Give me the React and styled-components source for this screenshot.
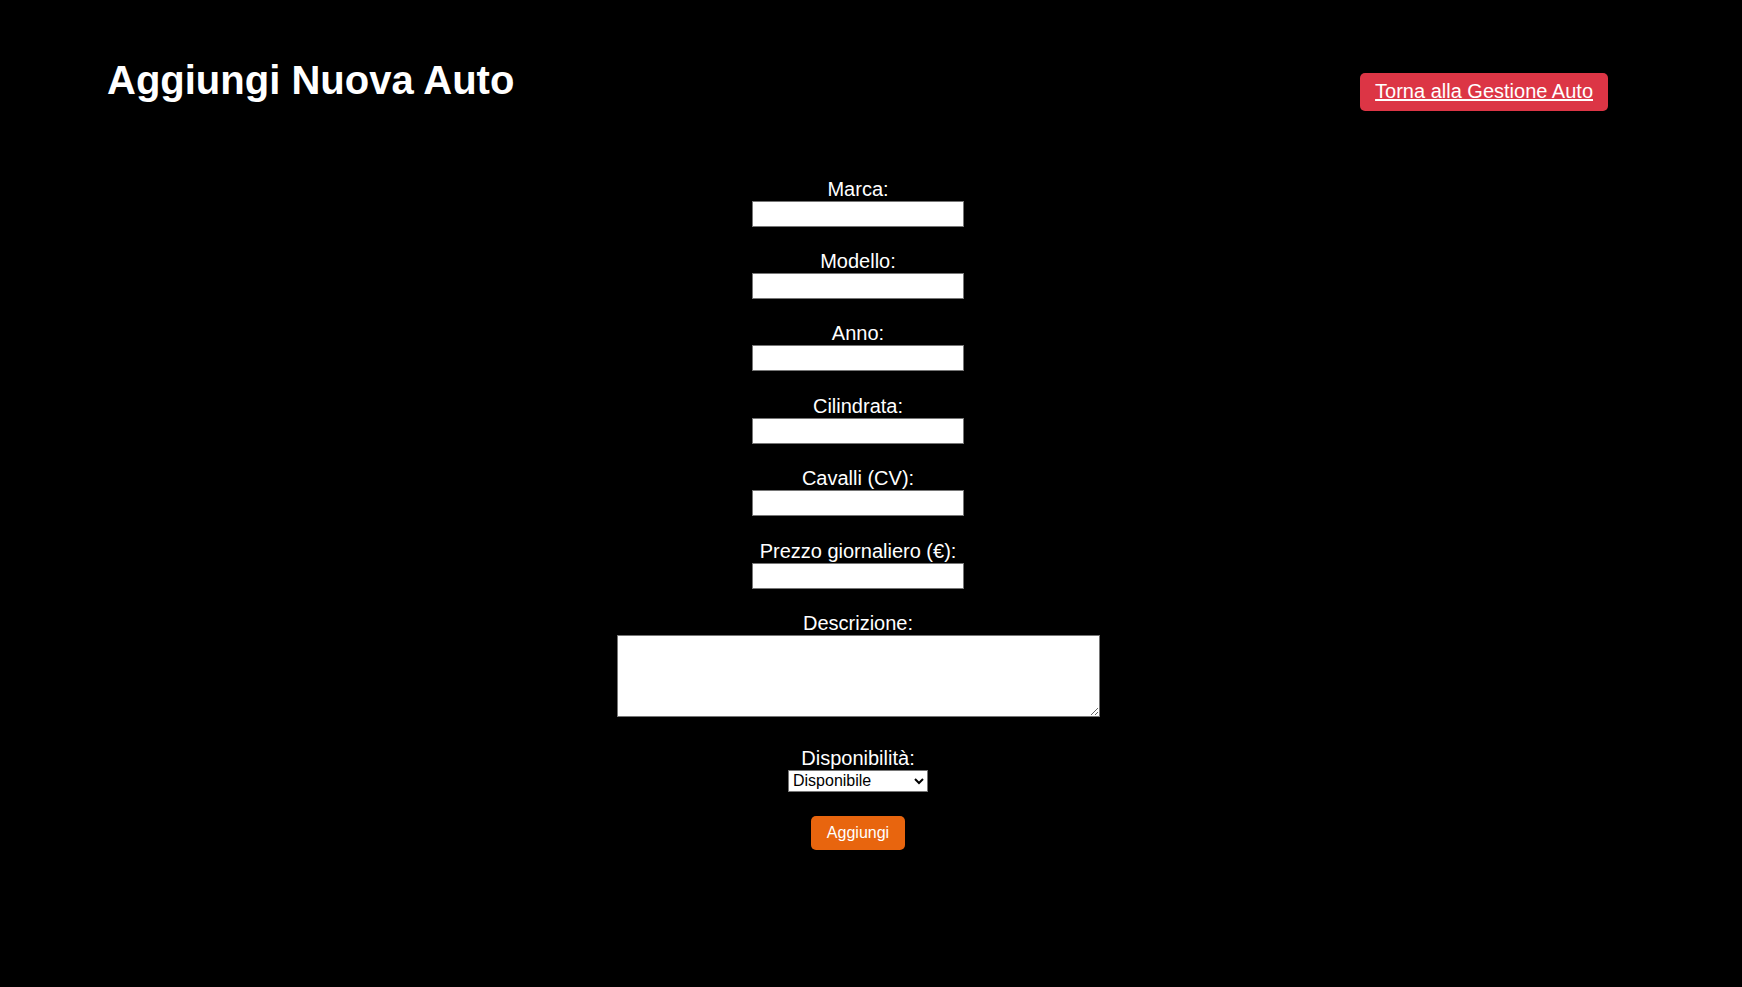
import React, { useState } from 'react'
import styled, { createGlobalStyle } from 'styled-components'

const GlobalStyle = createGlobalStyle`
    body{
        margin: 0;
        background-color: #000;
        color: #fff;
        font-family: "Liberation Sans", Arial, sans-serif;
    }
`

const fields = [
    { name: "marca", label: "Marca:" },
    { name: "modello", label: "Modello:" },
    { name: "anno", label: "Anno:" },
    { name: "cilindrata", label: "Cilindrata:" },
    { name: "cavalli", label: "Cavalli (CV):" },
    { name: "prezzo", label: "Prezzo giornaliero (€):" },
]

const App = () => {
    const [form, setForm] = useState({ descrizione: "", disponibilita: "disponibile" })

    const handleChange = (e) => {
        setForm({ ...form, [e.target.name]: e.target.value })
    }

    return (
        <>
            <GlobalStyle />
            <Page>
                <Header>
                    <Title>Aggiungi Nuova Auto</Title>
                    <BackLink href="#">Torna alla Gestione Auto</BackLink>
                </Header>
                <Form onSubmit={(e) => e.preventDefault()}>
                    {fields.map((f) => (
                        <Field key={f.name} $gap="23.4px">
                            <Label htmlFor={f.name}>{f.label}</Label>
                            <Input id={f.name} name={f.name} value={form[f.name] || ""} onChange={handleChange} />
                        </Field>
                    ))}
                    <Field $gap="29.5px">
                        <Label htmlFor="descrizione">Descrizione:</Label>
                        <TextArea id="descrizione" name="descrizione" value={form.descrizione} onChange={handleChange} />
                    </Field>
                    <Field $gap="24.5px">
                        <Label htmlFor="disponibilita">Disponibilità:</Label>
                        <Select id="disponibilita" name="disponibilita" value={form.disponibilita} onChange={handleChange}>
                            <option value="disponibile">Disponibile</option>
                            <option value="non_disponibile">Non disponibile</option>
                        </Select>
                    </Field>
                    <SubmitButton type="submit">Aggiungi</SubmitButton>
                </Form>
            </Page>
        </>
    )
}

const Page = styled.div`
    width: 1500px;
    margin-left: 108px;
    min-height: 987px;
`
const Header = styled.header`
    display: flex;
    justify-content: space-between;
    align-items: flex-start;
    padding-top: 57px;
`
const Title = styled.h1`
    margin: 0 0 0 -1px;
    font-size: 40px;
    line-height: 46px;
    font-weight: 700;
    color: #fff;
`
const BackLink = styled.a`
    margin-top: 16px;
    padding: 7px 15px 8px;
    background-color: #dc3545;
    color: #fff;
    font-size: 20px;
    line-height: 23px;
    text-decoration: underline;
    border-radius: 5px;
`
const Form = styled.form`
    margin-top: 66.6px;
    display: flex;
    flex-direction: column;
    align-items: center;
`
const Field = styled.div`
    display: flex;
    flex-direction: column;
    align-items: center;
    margin-bottom: ${(p) => p.$gap};
`
const Label = styled.label`
    font-size: 20px;
    line-height: 23px;
    color: #fff;
`
const Input = styled.input`
    box-sizing: border-box;
    width: 212px;
    height: 26px;
    padding: 2px 4px;
    border: 1px solid #767676;
    background: #fff;
    font-family: "Liberation Sans", Arial, sans-serif;
    font-size: 13px;
    margin: 0;
`
const TextArea = styled.textarea`
    box-sizing: border-box;
    width: 483px;
    height: 82.5px;
    padding: 2px 4px;
    border: 1px solid #767676;
    background: #fff;
    font-family: "Liberation Sans", Arial, sans-serif;
    font-size: 13px;
    margin: 0;
`
const Select = styled.select`
    box-sizing: border-box;
    width: 140px;
    height: 22px;
    margin: 0;
    border: 1px solid #767676;
    border-radius: 0;
    background-color: #fff;
    color: #000;
    font-family: "Liberation Sans", Arial, sans-serif;
    font-size: 16px;
`
const SubmitButton = styled.button`
    width: 94px;
    height: 34px;
    border: none;
    border-radius: 5px;
    background-color: #e8650e;
    color: #fff;
    font-family: "Liberation Sans", Arial, sans-serif;
    font-size: 16px;
    cursor: pointer;
`

export default App
